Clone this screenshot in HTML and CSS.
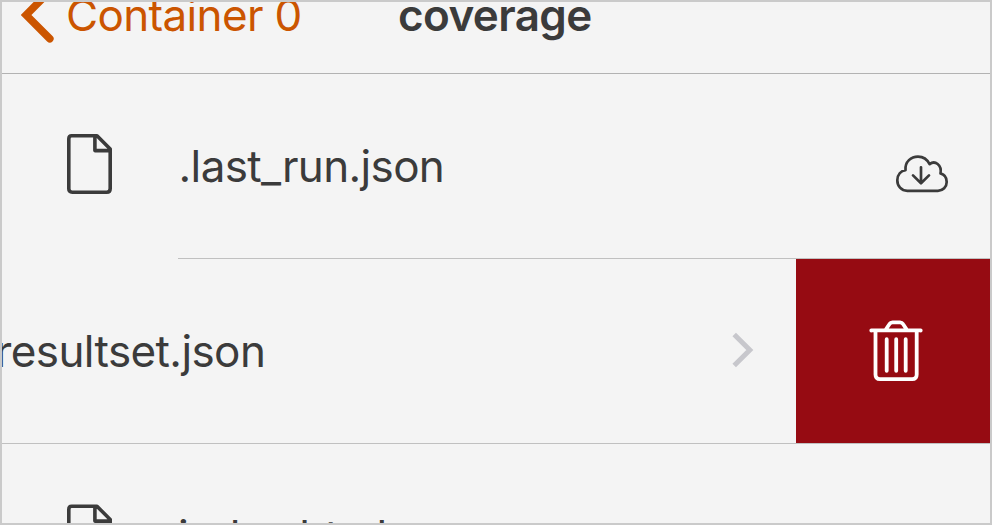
FILE: index.html
```
<!DOCTYPE html>
<html lang="en">
<head>
<meta charset="utf-8">
<title>coverage</title>
<link rel="stylesheet" href="styles.css">
</head>
<body>
<main class="screen">
  <header class="navbar">
    <a class="back">
      <svg class="back-icon" width="33" height="56" viewBox="0 0 33 56"><path d="M28.8 4.2 5 28l23.8 23.8"/></svg>
      <span class="back-label">Container 0</span>
    </a>
    <h1 class="title">coverage</h1>
  </header>
  <section class="row row-file">
    <svg class="file-icon" width="46" height="61" viewBox="0 0 46 61"><path d="M5.7 1.8H31L44.2 15V54.5Q44.2 58.2 40.7 58.2H6.2Q2.8 58.2 2.8 54.7V5Q2.8 1.8 5.7 1.8ZM28.9 2V16.6H44"/></svg>
    <div class="cell">
      <span class="name name-run">.last_run.json</span>
      <svg class="cloud-icon" width="54" height="40" viewBox="0 0 54 40"><path d="M12.3 37.8C6.2 37.8 2.3 33 2.3 27.3 2.3 21.5 6 17.7 10.5 17.1 9.8 8.5 16.2 3.6 23 3.6 28.3 3.6 32.2 6.3 34.6 11.2 40 6.9 47 12 45.5 20.4 49 21.4 51.7 24.5 51.7 28.9 51.7 34 47.8 37.8 43 37.8ZM26 14.3V29.8M18 22.4 26 30.3 34 22.4"/></svg>
    </div>
  </section>
  <section class="row row-swiped">
    <span class="name name-result">resultset.json</span>
    <svg class="chevron" width="22" height="36" viewBox="0 0 22 36"><path d="M2.2 2.5 17.8 18 2.2 33.5"/></svg>
    <div class="delete">
      <svg class="trash-icon" width="54" height="62" viewBox="0 0 54 62"><path d="M2.3 10.6V10.3H51.7V10.6M6.5 11V54.5Q6.5 59.2 11 59.2H43.2Q47.7 59.2 47.7 54.5V11M16.5 10 20.5 4Q21.5 2.3 23.5 2.3H31Q33 2.3 34 4L38 10M17.7 19.2V50.8M27.2 19.2V50.8M36.7 19.2V50.8"/></svg>
    </div>
  </section>
  <section class="row row-file">
    <svg class="file-icon" width="46" height="61" viewBox="0 0 46 61"><path d="M5.7 2.3H31L44.2 15.5V55Q44.2 58.7 40.7 58.7H6.2Q2.8 58.7 2.8 55.2V5.5Q2.8 2.3 5.7 2.3ZM28.9 2.5V17.1H44"/></svg>
    <div class="cell">
      <span class="name name-index">index.html</span>
    </div>
  </section>
</main>
</body>
</html>
```
FILE: styles.css
```
* { box-sizing: border-box; }
body { margin: 0; }
svg { display: block; flex: none; fill: none; }
.screen {
  width: 992px;
  height: 525px;
  border: 2px solid #cacaca;
  overflow: hidden;
  display: flex;
  flex-direction: column;
  background: #f4f4f4;
  color: #3b3b3b;
  font: 44px/60px Inter, "Liberation Sans", sans-serif;
  white-space: nowrap;
}
/* The bar is scrolled partly out of the top of the screen. */
.navbar {
  flex: none;
  height: 117px;
  margin-top: -45px;
  padding-left: 19px;
  display: flex;
  align-items: center;
  border-bottom: 1px solid #b2b2b2;
}
.back {
  display: flex;
  align-items: center;
  width: 377px;
  color: #cb5500;
}
.back-icon { stroke: currentColor; stroke-width: 7.6; stroke-linecap: round; }
.back-label { margin-left: 12px; letter-spacing: -0.65px; }
.title { margin: 0; font-size: 44px; font-weight: 600; letter-spacing: -0.6px; }
.row { flex: none; height: 185px; display: flex; align-items: center; }
.row-file { padding-left: 64px; }
.file-icon { stroke: #3b3b3b; stroke-width: 3.6; stroke-linejoin: round; margin-top: -4px; }
.cell {
  flex: 1;
  height: 185px;
  margin-left: 66px;
  padding-right: 40px;
  display: flex;
  align-items: center;
  justify-content: space-between;
  border-bottom: 1px solid #c0c0c0;
}
.name { letter-spacing: -0.6px; }
.name-run { margin-left: 0.6px; letter-spacing: -0.65px; }
.cloud-icon { margin: 13px 0.7px 0 0; stroke: #3b3b3b; stroke-width: 2.7; stroke-linejoin: round; stroke-linecap: round; }
.row-swiped { border-bottom: 1px solid #c0c0c0; }
.name-result { margin-left: -6.5px; }
.chevron { margin: 0 42px 2px auto; stroke: #c7c7cc; stroke-width: 5; }
.delete {
  width: 194px;
  height: 184px;
  display: flex;
  align-items: center;
  justify-content: center;
  background: #960b12;
}
.trash-icon { margin-left: 5px; stroke: #fff; stroke-width: 3.8; stroke-linecap: round; stroke-linejoin: round; }
```
